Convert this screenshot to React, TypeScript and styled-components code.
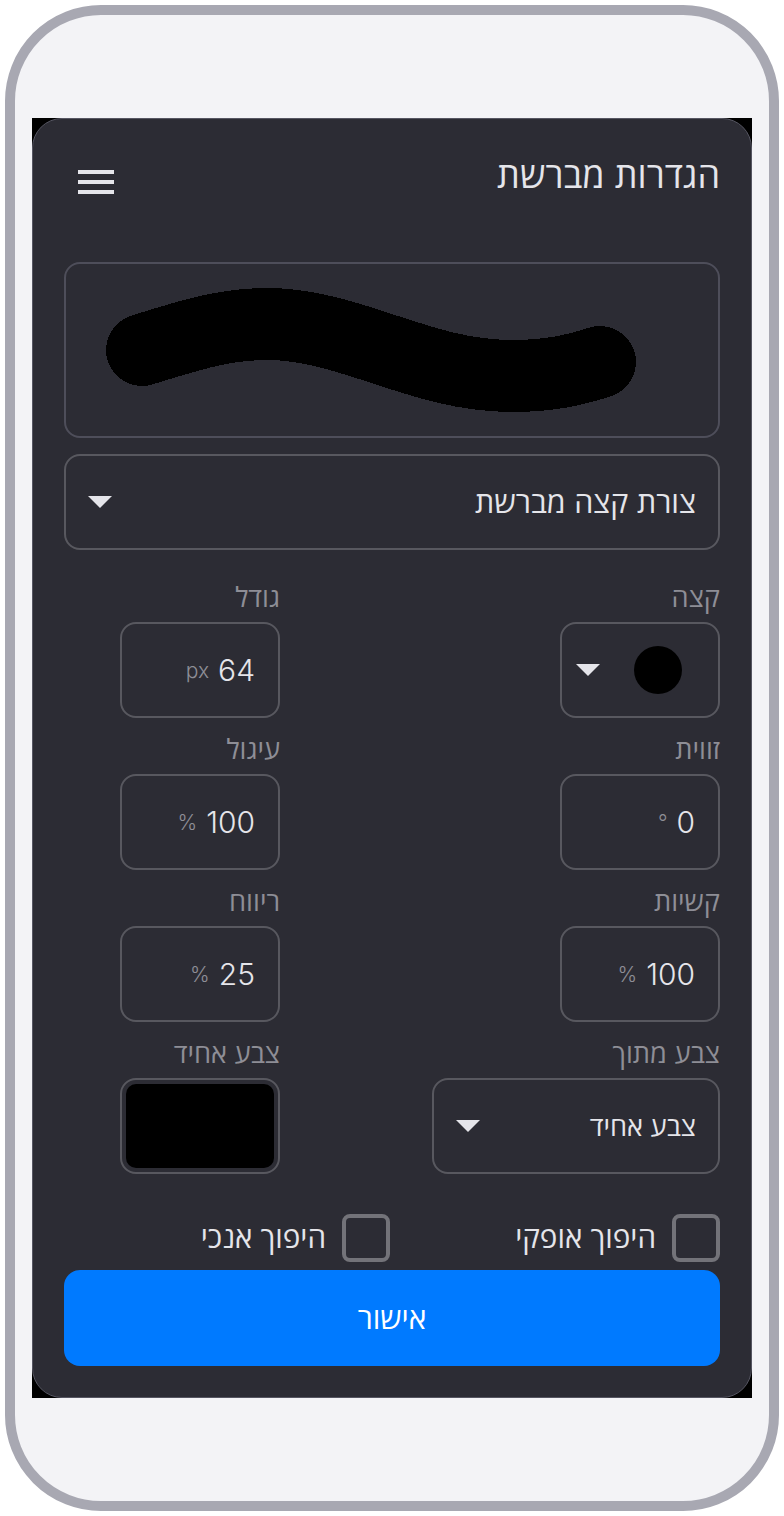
import React from "react";
import styled, { createGlobalStyle } from "styled-components";

const Global = createGlobalStyle`
  html, body { margin: 0; padding: 0; background: #fff; }
  * { box-sizing: border-box; }
  body { font-family: Inter, "Open Sans", sans-serif; }
`;

const Page = styled.div`
  width: 784px;
  height: 1516px;
  padding: 5px;
`;

const Phone = styled.div`
  width: 774px;
  height: 1506px;
  border: 10px solid #a8a8b2;
  border-radius: 96px;
  background: #f3f3f6;
  padding: 103px 17px;
`;

const Screen = styled.div`
  width: 720px;
  height: 1280px;
  background: #000;
`;

const Dialog = styled.div`
  direction: rtl;
  width: 720px;
  height: 1280px;
  padding: 31px;
  border: 1px solid #565662;
  border-radius: 30px;
  background: #2c2c34;
  display: flex;
  flex-direction: column;
`;

const Header = styled.header`
  display: flex;
  justify-content: space-between;
  align-items: flex-start;
  height: 64px;
  margin-bottom: 48px;
`;

const Title = styled.h1`
  margin: 0;
  font-size: 36px;
  font-weight: 400;
  line-height: 50px;
  color: #e5e5ea;
`;

const MenuButton = styled.div`
  width: 64px;
  height: 64px;
  display: flex;
  align-items: center;
  justify-content: center;
`;

const Preview = styled.div`
  height: 176px;
  border: 2px solid #4e4e5a;
  border-radius: 16px;
  margin-bottom: 16px;
  overflow: hidden;
`;

const Box = styled.div<{ $w?: number }>`
  height: 96px;
  width: ${(p) => (p.$w ? `${p.$w}px` : "100%")};
  border: 2px solid #58585f;
  border-radius: 16px;
  padding: 0 22px;
  display: flex;
  align-items: center;
  justify-content: space-between;
  color: #e5e5ea;
  font-size: 30.4px;
`;

const TipBox = styled(Box)`
  padding: 0 36px 0 14px;
`;

const BoxText = styled.span`
  margin-bottom: 2px;
`;

const Arrow = styled.span`
  width: 0;
  height: 0;
  border-left: 12px solid transparent;
  border-right: 12px solid transparent;
  border-top: 12px solid #e5e5ea;
  flex: none;
`;

const Dot = styled.span`
  width: 48px;
  height: 48px;
  border-radius: 50%;
  background: #000;
`;

const Grid = styled.div`
  display: grid;
  grid-template-columns: 288px 216px;
  column-gap: 152px;
  margin-top: 32px;
`;

const Field = styled.div`
  height: 152px;
  display: flex;
  flex-direction: column;
`;

const Label = styled.div`
  height: 40px;
  font-size: 27.2px;
  line-height: 32px;
  color: #8e8e96;
`;

const Value = styled.div`
  display: flex;
  align-items: center;
  gap: 9px;
  padding-right: 1px;
`;

const Num = styled.span`
  direction: ltr;
  font-size: 30px;
  font-weight: 300;
`;

const Unit = styled.span`
  direction: ltr;
  font-size: 21px;
  font-weight: 300;
  color: #8e8e96;
`;

const Swatch = styled(Box)`
  padding: 4px;
`;

const SwatchFill = styled.div`
  width: 100%;
  height: 100%;
  background: #000;
  border-radius: 10px;
`;

const SmallText = styled(BoxText)`
  font-size: 27.2px;
`;

const Checks = styled.div`
  display: grid;
  grid-template-columns: 330px auto;
  margin-top: 24px;
  height: 56px;
`;

const Check = styled.label`
  display: flex;
  align-items: center;
  gap: 16px;
  height: 48px;
  font-size: 29.6px;
  color: #e5e5ea;
`;

const CheckText = styled.span`
  margin-bottom: 3px;
`;

const Tick = styled.span`
  width: 48px;
  height: 48px;
  border: 4px solid #737379;
  border-radius: 8px;
  flex: none;
`;

const Confirm = styled.button`
  height: 96px;
  width: 100%;
  flex: none;
  border: none;
  border-radius: 16px;
  background: #007aff;
  color: #fff;
  font-family: inherit;
  font-size: 30px;
  padding: 0 0 2px;
`;

const NumberField = ({ label, num, unit }: { label: string; num: string; unit: string }) => (
  <Field>
    <Label>{label}</Label>
    <Box $w={160}>
      <Value>
        <Num>{num}</Num>
        <Unit>{unit}</Unit>
      </Value>
    </Box>
  </Field>
);

export default function App() {
  return (
    <Page>
      <Global />
      <Phone>
        <Screen>
          <Dialog>
            <Header>
              <Title>הגדרות מברשת</Title>
              <MenuButton>
                <svg width="36" height="24" viewBox="0 0 36 24" fill="#e5e5ea">
                  <rect y="0" width="36" height="4" />
                  <rect y="10" width="36" height="4" />
                  <rect y="20" width="36" height="4" />
                </svg>
              </MenuButton>
            </Header>
            <Preview>
              <svg width="652" height="172" viewBox="2 2 652 172" fill="none" shapeRendering="crispEdges">
                <path
                  d="M78 88 C126 73 161 62 203 62 C286 62 356 114 448 114 C486 114 511 108 536 100"
                  stroke="#000"
                  strokeWidth="72"
                  strokeLinecap="round"
                />
              </svg>
            </Preview>
            <Box>
              <BoxText>צורת קצה מברשת</BoxText>
              <Arrow />
            </Box>
            <Grid>
              <Field>
                <Label>קצה</Label>
                <TipBox $w={160}>
                  <Dot />
                  <Arrow />
                </TipBox>
              </Field>
              <NumberField label="גודל" num="64" unit="px" />
              <NumberField label="זווית" num="0" unit="°" />
              <NumberField label="עיגול" num="100" unit="%" />
              <NumberField label="קשיות" num="100" unit="%" />
              <NumberField label="ריווח" num="25" unit="%" />
              <Field>
                <Label>צבע מתוך</Label>
                <Box>
                  <SmallText>צבע אחיד</SmallText>
                  <Arrow />
                </Box>
              </Field>
              <Field>
                <Label>צבע אחיד</Label>
                <Swatch $w={160}>
                  <SwatchFill />
                </Swatch>
              </Field>
            </Grid>
            <Checks>
              <Check>
                <Tick />
                <CheckText>היפוך אופקי</CheckText>
              </Check>
              <Check>
                <Tick />
                <CheckText>היפוך אנכי</CheckText>
              </Check>
            </Checks>
            <Confirm>אישור</Confirm>
          </Dialog>
        </Screen>
      </Phone>
    </Page>
  );
}
